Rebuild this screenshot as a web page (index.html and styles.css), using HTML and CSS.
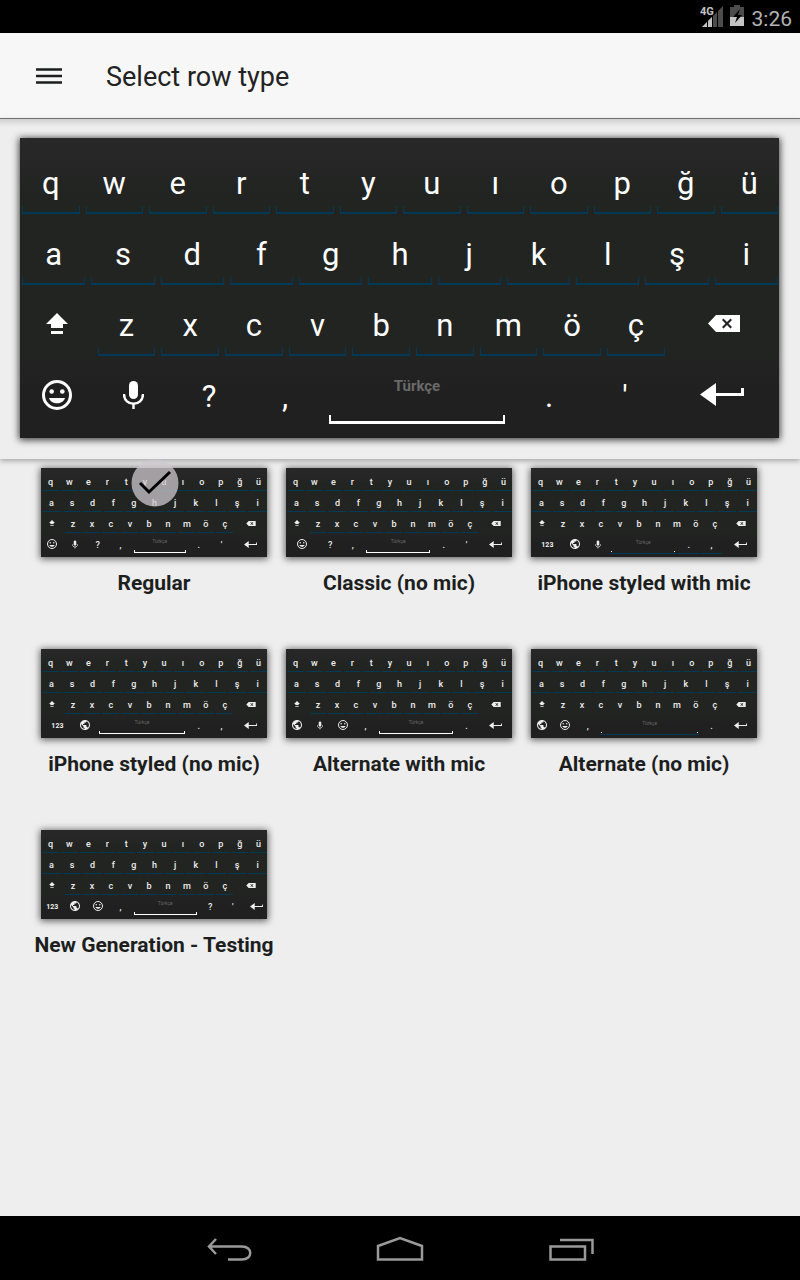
FILE: index.html
```html
<!DOCTYPE html>
<html lang="en">
<head>
<meta charset="utf-8">
<meta name="viewport" content="width=device-width, initial-scale=1">
<title>Select row type</title>
<link rel="stylesheet" href="styles.css">
</head>
<body>
<svg class="sprite" aria-hidden="true">
  <symbol id="shift" viewBox="0 0 22 22"><path d="M11 0 22 11H17V15H5V11H0Z"/><path d="M5 18H17V21H5Z"/></symbol>
  <symbol id="back" viewBox="0 0 32 17"><path fill-rule="evenodd" d="M8 0H32V17H8L0 8.500ZM14 5 17.500 8.500 14 12 15.500 13.500 19 10 22.500 13.500 24 12 20.500 8.500 24 5 22.500 3.500 19 7 15.500 3.500Z"/></symbol>
  <symbol id="emoji" viewBox="0 0 30 30"><circle cx="15" cy="15" r="13.500" fill="none" stroke="currentColor" stroke-width="3"/><circle cx="9.700" cy="11.500" r="2.300"/><circle cx="20.300" cy="11.500" r="2.300"/><path d="M7 18H23C21 25 9 25 7 18Z"/></symbol>
  <symbol id="mic" viewBox="0 0 21 28"><rect x="6" y="0" width="9" height="18" rx="4.500"/><path d="M1 13C1 26 20 26 20 13M10.500 22V28" fill="none" stroke="currentColor" stroke-width="2.400"/></symbol>
  <symbol id="enter" viewBox="0 0 44 23"><path d="M0 11.500 16 0V10H41V5H44V13H16V23Z"/></symbol>
  <symbol id="globe" viewBox="2 2 20 20"><path d="M12 2C6.480 2 2 6.480 2 12s4.480 10 10 10 10-4.480 10-10S17.520 2 12 2zm-1 17.930c-3.950-.49-7-3.850-7-7.930 0-.62.080-1.210.21-1.790L9 15v1c0 1.100.9 2 2 2v1.930zm6.900-2.540c-.26-.81-1-1.390-1.900-1.390h-1v-3c0-.55-.45-1-1-1H8v-2h2c.55 0 1-.45 1-1V7h2c1.100 0 2-.9 2-2v-.41c2.930 1.190 5 4.060 5 7.410 0 2.080-.8 3.970-2.100 5.390z"/></symbol>
</svg>

<div class="status">
  <svg class="status-signal" viewBox="0 0 24 24" aria-label="4G signal" role="img">
    <path fill="#4c4c4c" d="M23 2V23H2Z"/>
    <path fill="#c4c4c4" d="M12 13V23H2Z"/>
    <path stroke="#000" d="M7.500 5V23M12.500 5V23M17.500 5V23"/>
    <text class="status-network" x="0" y="11">4G</text>
  </svg>
  <svg class="status-battery" viewBox="0 0 14 21" aria-label="Battery charging" role="img">
    <path fill="#4c4c4c" d="M4 0H10V2H14V12H0V2H4Z"/>
    <path fill="#c4c4c4" d="M0 12H14V21H0Z"/>
    <path d="M10 4 3 12H7L5 18 12 10H8Z"/>
  </svg>
  <time class="status-clock">3:26</time>
</div>

<header class="app-bar">
  <button class="menu" aria-label="Menu"><svg viewBox="0 0 26 16"><path d="M0 1.500H26M0 8H26M0 14.500H26" stroke="currentColor" stroke-width="2.600"/></svg></button>
  <h1 class="title">Select row type</h1>
</header>

<section class="preview" aria-label="Preview">
  <div class="keyboard" data-layout="regular"></div>
</section>

<main class="options">
  <button class="option" aria-pressed="true">
    <span class="keyboard small" data-layout="regular"></span>
    <svg class="check" viewBox="0 0 48 48"><circle cx="24" cy="24" r="23.500"/><path d="M9 24 18 33 39 13"/></svg>
    <span class="name">Regular</span>
  </button>
  <button class="option"><span class="keyboard small" data-layout="classic"></span><span class="name">Classic (no mic)</span></button>
  <button class="option"><span class="keyboard small lined" data-layout="phoneMic"></span><span class="name">iPhone styled with mic</span></button>
  <button class="option"><span class="keyboard small" data-layout="phone"></span><span class="name">iPhone styled (no mic)</span></button>
  <button class="option"><span class="keyboard small" data-layout="alternateMic"></span><span class="name">Alternate with mic</span></button>
  <button class="option"><span class="keyboard small lined" data-layout="alternate"></span><span class="name">Alternate (no mic)</span></button>
  <button class="option"><span class="keyboard small" data-layout="newGeneration"></span><span class="name">New Generation - Testing</span></button>
</main>

<nav class="system-nav">
  <button class="nav-button" aria-label="Back"><svg viewBox="0 0 48 28"><path d="M10 3 3 10.500 10 18M3 10.500H36C47 10.500 47 23.500 36 23.500H22"/></svg></button>
  <button class="nav-button" aria-label="Home"><svg viewBox="0 0 48 28"><path d="M2 10 24 2 46 10V23.500H2Z"/></svg></button>
  <button class="nav-button" aria-label="Recent apps"><svg viewBox="0 0 48 28"><path d="M4.500 10.500H39V23.500H4.500ZM14 4H46.500V18"/></svg></button>
</nav>
<script src="keyboards.js"></script>
</body>
</html>
```

FILE: styles.css
```css
* {
  box-sizing: border-box;
}

body {
  margin: 0;
  min-height: 100vh;
  display: flex;
  flex-direction: column;
  background: #eee;
  color: #1c1f1e;
  font-family: Roboto, "Noto Sans", sans-serif;
}

button {
  margin: 0;
  padding: 0;
  border: 0;
  background: none;
  color: inherit;
  font: inherit;
  cursor: pointer;
}

svg {
  display: block;
}

.sprite {
  display: none;
}

.status {
  display: flex;
  align-items: center;
  justify-content: flex-end;
  height: 33px;
  padding-right: 8px;
  background: #000;
}

.status-signal {
  width: 24px;
  height: 24px;
  margin: 0 6px 2px 0;
}

.status-network {
  fill: #c4c4c4;
  stroke: #000;
  stroke-width: 2px;
  paint-order: stroke;
  font-size: 11px;
  font-weight: 700;
}

.status-battery {
  width: 14px;
  height: 21px;
  margin: 0 8px 2px 0;
}

.status-clock {
  color: #b4b4b4;
  font-size: 21px;
  line-height: 32px;
  padding-top: 4px;
}

.app-bar {
  display: flex;
  align-items: center;
  gap: 44px;
  height: 86px;
  padding: 0 36px;
  background: #f7f7f7;
  border-bottom: 1px solid #777;
}

.menu svg {
  width: 26px;
  height: 16px;
}

.title {
  margin: 0;
  padding-top: 2px;
  font-size: 27px;
  font-weight: 400;
  line-height: 32px;
  color: #222;
}

.preview {
  position: relative;
  z-index: 1;
  padding: 19px 21px 21px 20px;
  background: linear-gradient(#d0d0d0, #eee 8px);
  box-shadow: 0 2px 5px rgba(0, 0, 0, 0.3);
}

.keyboard {
  --gap: 6px;
  --line: #003a57;
  display: grid;
  grid-template-rows: repeat(4, 71px);
  padding: 5px 1px 11px 2px;
  overflow: hidden;
  background: linear-gradient(#282828, #222422 18%, #222422 70%, #202020 85%);
  box-shadow: 0 1px 7px 1px rgba(0, 0, 0, 0.75);
  color: #fff;
  font-size: 31px;
  line-height: 36px;
}

.row {
  display: flex;
  gap: var(--gap);
}

.key {
  position: relative;
  flex: 1 1 0;
  min-width: 0;
  display: flex;
  align-items: center;
  justify-content: center;
  padding-top: 11px;
}

.key svg {
  fill: currentColor;
  margin-bottom: 5px;
}

.letter::after,
.space::after {
  content: "";
  position: absolute;
  inset: auto 0 0;
  height: 6px;
  border: 1px solid var(--line);
  border-bottom-width: 2px;
  border-top: 0;
}

.space {
  align-items: flex-start;
  color: #6a6a6a;
  font-size: 15px;
  font-weight: 700;
  line-height: 20px;
  padding-top: 20px;
}

.space::after {
  inset: auto 3px 3px;
  border: 2px solid #fff;
  border-bottom-width: 3px;
  border-top: 0;
}

.icon-shift { width: 22px; height: 22px; }
.icon-back { width: 32px; height: 17px; }
.icon-emoji { width: 30px; height: 30px; }
.icon-mic { width: 21px; height: 28px; }
.icon-enter { width: 44px; height: 23px; }

.options {
  flex: 1;
  display: grid;
  grid-template-columns: repeat(3, 1fr);
  align-content: start;
  row-gap: 51px;
  padding: 9px 33px 9px 32px;
}

.option {
  position: relative;
  display: flex;
  flex-direction: column;
  gap: 11px;
  padding: 0 10px 0 9px;
}

.name {
  align-self: center;
  margin: 0 -9px;
  font-size: 21px;
  font-weight: 700;
  line-height: 30px;
  white-space: nowrap;
}

.check {
  position: absolute;
  z-index: 2;
  top: -9px;
  left: calc(50% - 24px);
  width: 48px;
  height: 48px;
  fill: rgba(205, 200, 205, 0.75);
}

.check path {
  fill: none;
  stroke: #000;
  stroke-width: 3px;
}

.small {
  --gap: 2px;
  --line: #003a57;
  align-self: stretch;
  grid-template-rows: repeat(4, 21px);
  padding: 2px 0 3px 1px;
  box-shadow: 0 1px 7px 1px rgba(0, 0, 0, 0.6);
  color: #eee;
  font-size: 9px;
  font-weight: 500;
  line-height: 12px;
}

.small .key {
  padding-top: 3px;
}

.small .key svg {
  margin-bottom: 2px;
}

.small .letter::after {
  height: 1px;
  border-width: 0 0 1px;
}

.small .space {
  color: #666;
  font-size: 5px;
  font-weight: 400;
  line-height: 6px;
  padding-top: 5px;
}

.small .space::after {
  inset: auto 1px 1px;
  height: 2px;
  border-width: 0 1px 1px;
}

.small .word {
  font-size: 7px;
  font-weight: 700;
}

.small .icon-shift { width: 6px; height: 6px; }
.small .icon-back { width: 10px; height: 5px; }
.small .icon-emoji { width: 10px; height: 10px; }
.small .icon-globe { width: 10px; height: 10px; }
.small .icon-mic { width: 6px; height: 9px; }
.small .icon-enter { width: 13px; height: 7px; }

.lined .row:nth-child(3) .letter::after {
  display: none;
}

.lined .space {
  border-bottom: 1px solid var(--line);
  padding-top: 6px;
}

.lined .space::after {
  height: 1px;
  border-width: 0 1px;
}

.system-nav {
  display: flex;
  justify-content: center;
  height: 64px;
  background: #000;
}

.nav-button {
  width: 170px;
  display: flex;
  align-items: center;
  justify-content: center;
  padding-top: 4px;
}

.nav-button svg {
  width: 48px;
  height: 28px;
  fill: none;
  stroke: #999;
  stroke-width: 2.5px;
}
```

FILE: keyboards.js
```js
// Each key is [content, width share]; "#name" refers to an icon in the sprite.
const letters = text => [...text].map(c => [c, 58, "letter"]);

const upperRows = [
  letters("qwertyuıopğü"),
  letters("asdfghjklşi"),
  [["#shift", 70], ...letters("zxcvbnmöç"), ["#back", 108]]
];

const space = width => ["Türkçe", width, "space"];

const bottomRows = {
  regular: [["#emoji", 70], ["#mic", 70], ["?", 70], [",", 70], space(182), [".", 70], ["'", 70], ["#enter", 112]],
  classic: [["#emoji", 104], ["?", 70], [",", 70], space(224), [".", 70], ["'", 70], ["#enter", 112]],
  phoneMic: [["123", 104, "word"], ["#globe", 70], ["#mic", 70], space(224), [".", 70, "letter"], [",", 70, "letter"], ["#enter", 112]],
  phone: [["123", 104, "word"], ["#globe", 70], space(300), [".", 70], [",", 70], ["#enter", 112]],
  alternateMic: [["#globe", 70], ["#mic", 70], ["#emoji", 70], [",", 70], space(258), [".", 70], ["#enter", 112]],
  alternate: [["#globe", 70], ["#emoji", 70], [",", 70], space(334), [".", 70], ["#enter", 112]],
  newGeneration: [["123", 70, "word"], ["#globe", 70], ["#emoji", 70], [",", 70], space(220), ["?", 70], ["'", 70], ["#enter", 74]]
};

function keyHtml([content, width, kind = ""]) {
  const face = content[0] === "#"
    ? `<svg class="icon-${content.slice(1)}"><use href="${content}"/></svg>`
    : content;
  return `<span class="key ${kind}" style="flex-grow:${width}">${face}</span>`;
}

for (const board of document.querySelectorAll(".keyboard")) {
  board.innerHTML = [...upperRows, bottomRows[board.dataset.layout]]
    .map(row => `<span class="row">${row.map(keyHtml).join("")}</span>`)
    .join("");
}
```
